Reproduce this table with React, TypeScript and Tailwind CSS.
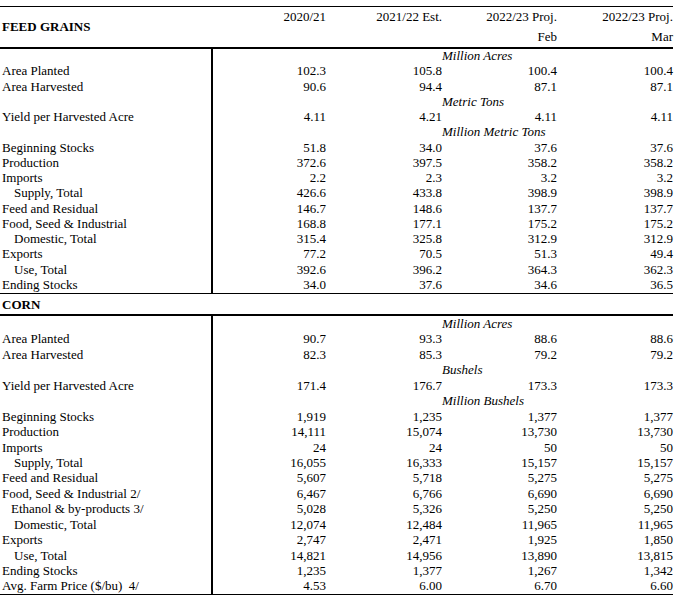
type Row = { unit?: string; label?: string; v?: string[]; indent?: string };

const feedRows: Row[] = [
  { unit: "Million Acres" },
  { label: "Area Planted", v: ["102.3", "105.8", "100.4", "100.4"] },
  { label: "Area Harvested", v: ["90.6", "94.4", "87.1", "87.1"] },
  { unit: "Metric Tons" },
  { label: "Yield per Harvested Acre", v: ["4.11", "4.21", "4.11", "4.11"] },
  { unit: "Million Metric Tons" },
  { label: "Beginning Stocks", v: ["51.8", "34.0", "37.6", "37.6"] },
  { label: "Production", v: ["372.6", "397.5", "358.2", "358.2"] },
  { label: "Imports", v: ["2.2", "2.3", "3.2", "3.2"] },
  { label: "Supply, Total", v: ["426.6", "433.8", "398.9", "398.9"], indent: "pl-[14px]" },
  { label: "Feed and Residual", v: ["146.7", "148.6", "137.7", "137.7"] },
  { label: "Food, Seed & Industrial", v: ["168.8", "177.1", "175.2", "175.2"] },
  { label: "Domestic, Total", v: ["315.4", "325.8", "312.9", "312.9"], indent: "pl-[14px]" },
  { label: "Exports", v: ["77.2", "70.5", "51.3", "49.4"] },
  { label: "Use, Total", v: ["392.6", "396.2", "364.3", "362.3"], indent: "pl-[14px]" },
  { label: "Ending Stocks", v: ["34.0", "37.6", "34.6", "36.5"] },
];

const cornRows: Row[] = [
  { unit: "Million Acres" },
  { label: "Area Planted", v: ["90.7", "93.3", "88.6", "88.6"] },
  { label: "Area Harvested", v: ["82.3", "85.3", "79.2", "79.2"] },
  { unit: "Bushels" },
  { label: "Yield per Harvested Acre", v: ["171.4", "176.7", "173.3", "173.3"] },
  { unit: "Million Bushels" },
  { label: "Beginning Stocks", v: ["1,919", "1,235", "1,377", "1,377"] },
  { label: "Production", v: ["14,111", "15,074", "13,730", "13,730"] },
  { label: "Imports", v: ["24", "24", "50", "50"] },
  { label: "Supply, Total", v: ["16,055", "16,333", "15,157", "15,157"], indent: "pl-[14px]" },
  { label: "Feed and Residual", v: ["5,607", "5,718", "5,275", "5,275"] },
  { label: "Food, Seed & Industrial 2/", v: ["6,467", "6,766", "6,690", "6,690"] },
  { label: "Ethanol & by-products 3/", v: ["5,028", "5,326", "5,250", "5,250"], indent: "pl-[11px]" },
  { label: "Domestic, Total", v: ["12,074", "12,484", "11,965", "11,965"], indent: "pl-[14px]" },
  { label: "Exports", v: ["2,747", "2,471", "1,925", "1,850"] },
  { label: "Use, Total", v: ["14,821", "14,956", "13,890", "13,815"], indent: "pl-[14px]" },
  { label: "Ending Stocks", v: ["1,235", "1,377", "1,267", "1,342"] },
  { label: "Avg. Farm Price ($/bu)  4/", v: ["4.53", "6.00", "6.70", "6.60"] },
];

const cols = "grid grid-cols-[213px_113px_116px_115px_116px]";

const Section = ({ rows, rowH }: { rows: Row[]; rowH: string }) => (
  <div>
    {rows.map((r, i) => (
      <div key={i} className={`${cols} ${rowH}`}>
        <div className={`border-r-2 border-black whitespace-pre ${r.indent ?? "pl-[2px]"}`}>{r.label}</div>
        {r.unit ? (
          <>
            <div />
            <div />
            <div className="col-span-2 italic whitespace-nowrap">{r.unit}</div>
          </>
        ) : (
          r.v?.map((x, j) => (
            <div key={j} className="text-right">
              {x}
            </div>
          ))
        )}
      </div>
    ))}
  </div>
);

export default function App() {
  return (
    <div className="min-h-screen bg-white pt-[6px] text-black font-['Liberation_Serif',serif] text-[13px]">
      <div className="w-[673px]">
        {/* header */}
        <div className={`${cols} border-t border-b-2 border-black`}>
          <div className="row-span-2 flex items-center pl-[2px] font-bold">FEED GRAINS</div>
          <div className="h-[20px] leading-[19px] text-right">2020/21</div>
          <div className="h-[20px] leading-[19px] text-right">2021/22 Est.</div>
          <div className="h-[20px] leading-[19px] text-right">2022/23 Proj.</div>
          <div className="h-[20px] leading-[19px] text-right">2022/23 Proj.</div>
          <div className="h-[20px]" />
          <div className="h-[20px]" />
          <div className="h-[20px] leading-[19px] text-right">Feb</div>
          <div className="h-[20px] leading-[19px] text-right">Mar</div>
        </div>

        <div className="border-b border-black">
          <Section rows={feedRows} rowH="h-[15.25px] leading-[14.5px]" />
        </div>

        <div className="h-[22px] leading-[21px] pl-[2px] font-bold border-b-2 border-black">CORN</div>

        <div className="border-b border-black">
          <Section rows={cornRows} rowH="h-[15.45px] leading-[15px]" />
        </div>
      </div>
    </div>
  );
}
